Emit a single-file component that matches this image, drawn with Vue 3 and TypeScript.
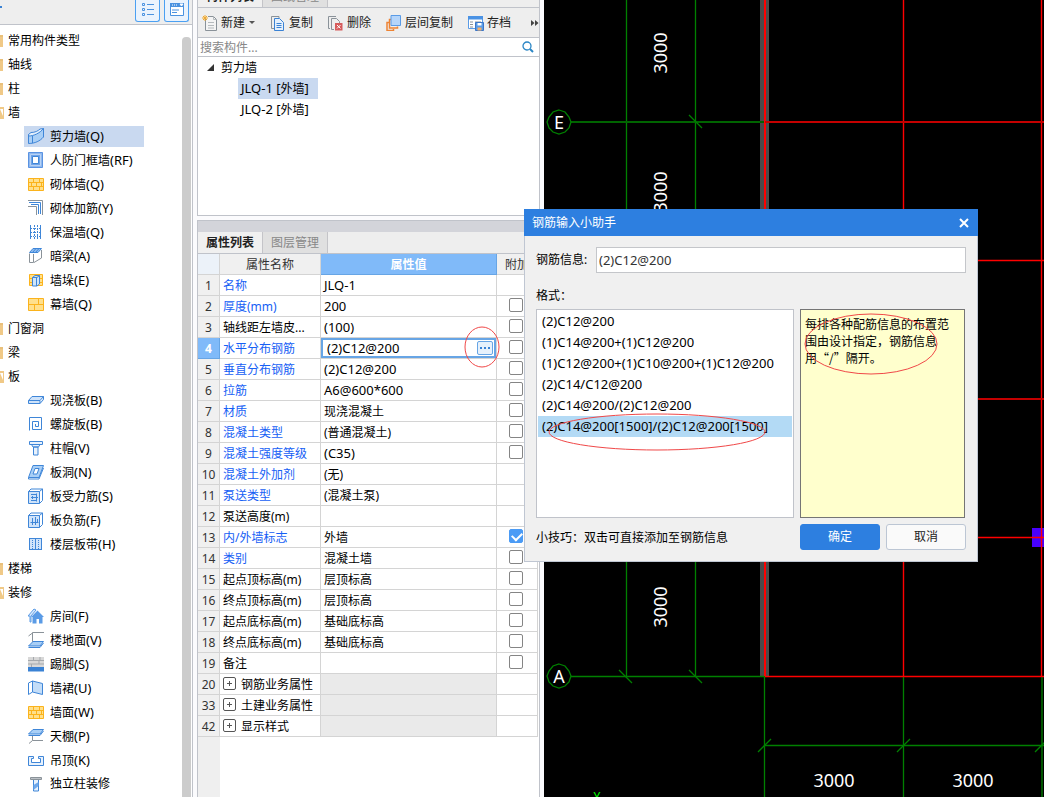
<script setup lang="ts">
import { ref } from 'vue'

interface TreeNode { name: string; hotkey?: string; icon: string; child?: boolean; selected?: boolean }
interface PropRow { no: number; name: string; value?: string; link?: boolean; check?: 'on' | 'off'; group?: boolean; editing?: boolean }

const B = '#3f86d8'
const L = '#cfe3fa'
const O = '#fbb31c'
const G = '#8a9299'

const icons: Record<string, string> = {
  wall: `<path d="M.5 6.500C7 6.500 12 4.500 15.500 .5V9C12 13 7 15.500 .5 15.500Z" fill="#a9cff6" stroke="${B}"/><path d="M.5 6.500L3 4.500C7 4.500 10 3 12 1L15.500 .5C12 5 6 8 .5 8Z" fill="#e4f0fc" stroke="${B}"/><path d="M4.500 8V15" stroke="${B}"/>`,
  frame: `<path d="M.5 .5h14v15h-14z" fill="#8fb8ee" stroke="#5a93e2"/><path d="M2.500 2.500h10v11h-10z" fill="#6fa3e8" stroke="#b8d3f5"/><path d="M4.500 4.500h6v7h-6z" fill="#fff" stroke="${B}"/>`,
  brick: `<path d="M.5 2.500h15v12h-15z" fill="#ffe08c" stroke="${O}"/><path d="M0 6.500h16M0 10.500h16M5.500 2v4M11.500 2v4M3.500 6v4M8.500 6v4M13.500 6v4M5.500 10v4M11.500 10v4" stroke="${O}" fill="none"/>`,
  rebar: `<path d="M0 .5h14.500V15M0 6.500h8.500V15" stroke="${G}" fill="none"/><path d="M1 2.500h11.500V14M3 4.500h7.500V14" stroke="${B}" fill="none"/>`,
  insul: `<path d="M2.500 1v14M12.500 1v14" stroke="${B}" fill="none"/><path d="M6.500 1v14M9.500 1v14" stroke="${B}" stroke-dasharray="2 1"/><path d="M3 4.500h10M3 8.500h10M3 12.500h10" stroke="${B}" stroke-dasharray="1 1"/>`,
  hidden: `<path d="M1.500 5.500L5 1.500h8.500V10L10 14L6.500 14.500H1.500Z" fill="#fff"/><path d="M1.500 5.500V14.500H5.500V6M13.500 2V10L6 14.500" fill="none" stroke="${G}"/><path d="M1.500 4.500L5 .5h8.500L10 4.500ZM4.500 4.500L8 .5M7.500 4.500L11 .5" fill="#8ebcf0" stroke="${B}"/>`,
  pier: `<path d="M1.500 2.500h13v11h-13z" fill="#ffe08c" stroke="${O}"/><path d="M1 6.500h14M1 10.500h14" stroke="${O}"/><path d="M4.500 5.500L7 3.500h4.500v8.500L9 14H4.500ZM8.500 5.500V14M4.500 5.500H9L11.500 3.500" fill="#cfe6fb" stroke="${B}"/>`,
  curtain: `<path d="M.5 2.500h15v12h-15z" fill="#ffe08c" stroke="${O}"/><path d="M0 8.500h16M10.500 3v5.500M6.500 8.500V15" stroke="${O}"/>`,
  slab: `<path d="M.5 8.500L4 4.500h11.500L12 8.500ZM.5 8.500v3H12v-3M12 11.500L15.500 7.500v-3" fill="${L}" stroke="${B}"/>`,
  spiral: `<path d="M1.500 14.500V1.500h12v12H4.500V5.500h6v5H7.500V8" stroke="${B}" fill="none"/>`,
  cap: `<path d="M1.500 1.500h13v3h-13zM3.500 4.500h8.500l-1.500 2.500H5ZM5.500 7h4.500v8H5.500z" fill="#e8f2fd" stroke="${B}"/>`,
  hole: `<path d="M.5 13.500L5 1.500h10.500L11 13.500Z" fill="#a9cff6" stroke="${B}"/><path d="M5 10L7 4.500h4L9 10Z" fill="#fff" stroke="${B}"/><path d="M.5 13.500v1.500H11L15.500 4" fill="none" stroke="${B}"/>`,
  force: `<path d="M.5 3.500h11v12H.5z" fill="${L}" stroke="${B}"/><path d="M.5 3.500L3 1h11.500v11.500L11.500 15.500M11.500 3.500L14.500 1M3 6.500h6M3 9.500h7M3 12.500h6M8.500 5.500v8M4.500 8v3" stroke="${B}" fill="none"/>`,
  neg: `<path d="M.5 3.500h11v12H.5z" fill="${L}" stroke="${B}"/><path d="M.5 3.500L3 1h11.500v11.500L11.500 15.500M11.500 3.500L14.500 1M4.500 6v7M7.500 5v8M2.500 10.500h8M9.500 7v4" stroke="${B}" fill="none"/>`,
  band: `<path d="M1.500 2.500h12v11h-12z" fill="${L}"/><path d="M1 2.500h13M1 13.500h13M1.500 2v12M7.500 2v12M13.500 2v12" stroke="${B}"/><path d="M4.500 4v9M10.500 4v9" stroke="${B}" stroke-dasharray="1 1"/>`,
  house: `<path d="M0 8L6 1l2 1-5 6v6H2V8Z" fill="#d9eafc" stroke="#5a9be6"/><path d="M3 9L9.500 2.500 16 9h-1.500v6.500H11V11H8.500v4.500H4.500V9Z" fill="#5a9be6"/>`,
  floor: `<path d="M16 .5H4.500V10M4.500 1L.5 4" stroke="${G}" fill="none"/><path d="M.5 14L5 9.500h10.500L12 14Z" fill="#a9cff6" stroke="${B}"/><path d="M.5 15.500H12L15.500 11" stroke="${B}" fill="none"/>`,
  skirt: `<path d="M0 1h16v10H0z" fill="#d8d8d8"/><path d="M0 4.500h16M0 8h16M5.500 1v3.500M11 4.500V8M3.500 8v3M12 1v3" stroke="#a5a9ad"/><path d="M0 11h16v4.500H0z" fill="#3a82d4"/>`,
  dado: `<path d="M.5 3L4.500 1v11L.5 14.500Z" fill="#fff" stroke="${B}"/><path d="M4.500 1L14.500 3.500v11L4.500 12Z" fill="#c3ddf8" stroke="${B}"/>`,
  ceil: `<path d="M.5 6L5 1.500h10.500L12 6Z" fill="#a9cff6" stroke="${B}"/><path d="M.5 7.500H12L15.500 3" stroke="${B}" fill="none"/><path d="M4.500 8v4.500H15M4.500 12.500L1 15.500" stroke="${G}" fill="none"/>`,
  hang: `<path d="M.5 4.500h5v2h-2v4h9v-4h-2v-2h5v9H.5z" fill="#e8f2fd" stroke="${B}"/>`,
  column: `<path d="M2.500 1.500h11v2h-11z" fill="#bcc1c6" stroke="${G}"/><path d="M5.500 4v11h5V4" fill="#e8f2fd" stroke="${B}"/><path d="M5.500 9L10.500 6v4L5.500 14Z" fill="#6fa8ea"/>`,
}

const nodes: TreeNode[] = [
  { name: '常用构件类型', icon: 'closed' },
  { name: '轴线', icon: 'closed' },
  { name: '柱', icon: 'closed' },
  { name: '墙', icon: 'open' },
  { name: '剪力墙', hotkey: '(Q)', icon: 'wall', child: true, selected: true },
  { name: '人防门框墙', hotkey: '(RF)', icon: 'frame', child: true },
  { name: '砌体墙', hotkey: '(Q)', icon: 'brick', child: true },
  { name: '砌体加筋', hotkey: '(Y)', icon: 'rebar', child: true },
  { name: '保温墙', hotkey: '(Q)', icon: 'insul', child: true },
  { name: '暗梁', hotkey: '(A)', icon: 'hidden', child: true },
  { name: '墙垛', hotkey: '(E)', icon: 'pier', child: true },
  { name: '幕墙', hotkey: '(Q)', icon: 'curtain', child: true },
  { name: '门窗洞', icon: 'closed' },
  { name: '梁', icon: 'closed' },
  { name: '板', icon: 'open' },
  { name: '现浇板', hotkey: '(B)', icon: 'slab', child: true },
  { name: '螺旋板', hotkey: '(B)', icon: 'spiral', child: true },
  { name: '柱帽', hotkey: '(V)', icon: 'cap', child: true },
  { name: '板洞', hotkey: '(N)', icon: 'hole', child: true },
  { name: '板受力筋', hotkey: '(S)', icon: 'force', child: true },
  { name: '板负筋', hotkey: '(F)', icon: 'neg', child: true },
  { name: '楼层板带', hotkey: '(H)', icon: 'band', child: true },
  { name: '楼梯', icon: 'closed' },
  { name: '装修', icon: 'open' },
  { name: '房间', hotkey: '(F)', icon: 'house', child: true },
  { name: '楼地面', hotkey: '(V)', icon: 'floor', child: true },
  { name: '踢脚', hotkey: '(S)', icon: 'skirt', child: true },
  { name: '墙裙', hotkey: '(U)', icon: 'dado', child: true },
  { name: '墙面', hotkey: '(W)', icon: 'brick', child: true },
  { name: '天棚', hotkey: '(P)', icon: 'ceil', child: true },
  { name: '吊顶', hotkey: '(K)', icon: 'hang', child: true },
  { name: '独立柱装修', icon: 'column', child: true },
]

const tools = [
  { label: '新建', menu: true, icon: `<path d="M3.500 4V15.500h11V4.500l-3-3H6" fill="#f4f4f4" stroke="${G}"/><path d="M11.500 1.500v3h3M6 7.500h6M6 10.500h6M6 13h6" fill="none" stroke="#b5babd"/><path d="M0 3h6M3 0v6M1 1l4 4M5 1L1 5" stroke="#f0a92e"/>` },
  { label: '复制', icon: `<path d="M9 3V1.500H1.500v12H4" fill="none" stroke="${G}"/><path d="M4.500 3.500h5l4 4v8h-9z" fill="#e4f0fc" stroke="#3a82d4"/><path d="M6.500 8.500h5M6.500 10.500h5M6.500 12.500h5" stroke="#3a82d4"/>` },
  { label: '删除', icon: `<path d="M8 1.500H.5v12H2" fill="none" stroke="${G}"/><path d="M6 14.500H3.500v-11h5l3 3V8" fill="none" stroke="${G}"/><path d="M7 8h7.500v7.500H7z" fill="#d65c5c"/><path d="M9 10l3.500 3.500M12.500 10L9 13.500" stroke="#fff"/>` },
  { label: '层间复制', icon: `<path d="M3 7.500H1V15.500h6.500V14" fill="none" stroke="#ee8434" stroke-width="1.500"/><path d="M5 4.500H3.500v8.500h8V11.500" fill="none" stroke="#ee8434" stroke-width="1.500"/><path d="M5 .5h9.500v10H5z" fill="#b5d5fa" stroke="#5a9be6"/>` },
  { label: '存档', icon: `<path d="M.5 1.500h14v12H.5z" fill="#fff" stroke="#5a9be6"/><path d="M0 1h15v3.500H0z" fill="#4a92e4"/><path d="M2 7h3M7 7h6M2 9.500h3M2 12h3" stroke="${G}"/><path d="M7.500 7.500h8v8h-8z" fill="#5a9be6" stroke="#3a76c8"/><path d="M9.500 8h4v2.500h-4z" fill="#fff"/><path d="M9.500 12.500h4v3h-4z" fill="#f4b06a"/>` },
]

const rows: PropRow[] = [
  { no: 1, name: '名称', value: 'JLQ-1', link: true },
  { no: 2, name: '厚度(mm)', value: '200', link: true, check: 'off' },
  { no: 3, name: '轴线距左墙皮...', value: '(100)', check: 'off' },
  { no: 4, name: '水平分布钢筋', value: '(2)C12@200', link: true, check: 'off', editing: true },
  { no: 5, name: '垂直分布钢筋', value: '(2)C12@200', link: true, check: 'off' },
  { no: 6, name: '拉筋', value: 'A6@600*600', link: true, check: 'off' },
  { no: 7, name: '材质', value: '现浇混凝土', link: true, check: 'off' },
  { no: 8, name: '混凝土类型', value: '(普通混凝土)', link: true, check: 'off' },
  { no: 9, name: '混凝土强度等级', value: '(C35)', link: true, check: 'off' },
  { no: 10, name: '混凝土外加剂', value: '(无)', link: true },
  { no: 11, name: '泵送类型', value: '(混凝土泵)', link: true },
  { no: 12, name: '泵送高度(m)' },
  { no: 13, name: '内/外墙标志', value: '外墙', link: true, check: 'on' },
  { no: 14, name: '类别', value: '混凝土墙', link: true, check: 'off' },
  { no: 15, name: '起点顶标高(m)', value: '层顶标高', check: 'off' },
  { no: 16, name: '终点顶标高(m)', value: '层顶标高', check: 'off' },
  { no: 17, name: '起点底标高(m)', value: '基础底标高', check: 'off' },
  { no: 18, name: '终点底标高(m)', value: '基础底标高', check: 'off' },
  { no: 19, name: '备注', check: 'off' },
  { no: 20, name: '钢筋业务属性', group: true },
  { no: 33, name: '土建业务属性', group: true },
  { no: 42, name: '显示样式', group: true },
]

const isLatin = (s?: string) => !!s && /^[\x20-\x7e]+$/.test(s)

const formats = [
  '(2)C12@200',
  '(1)C14@200+(1)C12@200',
  '(1)C12@200+(1)C10@200+(1)C12@200',
  '(2)C14/C12@200',
  '(2)C14@200/(2)C12@200',
  '(2)C14@200[1500]/(2)C12@200[1500]',
]
const activeFormat = ref(5)
const rebar = ref('(2)C12@200')
const cellValue = ref('(2)C12@200')
const keyword = ref('')
</script>

<template>
  <div class="app">
    <aside class="nav">
      <div class="nav-bar">
        <span class="dash"></span>
        <button class="view-btn" type="button" aria-label="列表视图">
          <svg width="16" height="16" fill="none" stroke="#4a92e0"><path d="M2.500 1.500h2v2h-2zM2.500 6.500h2v2h-2zM2.500 11.500h2v2h-2z" /><path d="M7 2.500h7M7 7.500h7M7 12.500h7" /></svg>
        </button>
        <button class="view-btn" type="button" aria-label="窗口视图">
          <svg width="16" height="16"><path d="M1.500 1.500h13v12h-13z" fill="#fff" stroke="#4a92e0" /><path d="M1 1h14v4H1z" fill="#4a92e0" /><path d="M3 3h1m1 0h1m1 0h1m3-1h3l-1.500 2z" stroke="#fff" fill="#fff" /><path d="M3 8h7M3 10.500h5" stroke="#4a92e0" /></svg>
        </button>
      </div>
      <div class="nav-body">
        <ul class="nav-list">
          <li v-for="(n, i) in nodes" :key="i" :class="{ child: n.child }">
            <template v-if="n.child">
              <a href="#" class="leaf" :class="{ selected: n.selected }"><svg width="16" height="16" v-html="icons[n.icon]"></svg><span>{{ n.name }}<span v-if="n.hotkey" class="latin">{{ n.hotkey }}</span></span></a>
            </template>
            <template v-else>
              <svg v-if="n.icon === 'closed'" class="folder" width="4" height="14"><path d="M0 1h3v2H0z" fill="#e9c07a" /><path d="M0 3h3v10H0z" fill="#f0c987" /></svg>
              <svg v-else class="folder" width="4" height="14"><path d="M0 1h4v12H0z" fill="#f0c987" /><path d="M0 3h3v7z" fill="#fff" /></svg>
              <span>{{ n.name }}</span>
            </template>
          </li>
        </ul>
        <div class="scroll"></div>
      </div>
    </aside>

    <section class="middle">
      <div class="parts">
        <div class="tab-strip cut">
          <button type="button" class="tab on">构件列表</button><button type="button" class="tab">图纸管理</button>
        </div>
        <div class="toolbar">
          <button v-for="t in tools" :key="t.label" type="button" class="tool">
            <svg width="16" height="16" v-html="t.icon"></svg>{{ t.label }}<i v-if="t.menu" class="caret"></i>
          </button>
          <button type="button" class="more" aria-label="更多"><svg width="8" height="8"><path d="M0 1l3.500 3L0 7zM4 1l3.500 3L4 7z" fill="#444" /></svg></button>
        </div>
        <div class="search">
          <input v-model="keyword" type="text" placeholder="搜索构件..." aria-label="搜索构件" />
          <svg width="12" height="12" fill="none" stroke="#2b86c5"><circle cx="5" cy="5" r="4" stroke-width="1.300" /><path d="M8 8l3 3" stroke-width="2" /></svg>
        </div>
        <div class="part-tree">
          <div class="root"><svg width="7" height="7"><path d="M7 0v7H0z" fill="#333" /></svg>剪力墙</div>
          <a href="#" class="part selected"><span class="latin">JLQ-1 [</span>外墙<span class="latin">]</span></a>
          <a href="#" class="part"><span class="latin">JLQ-2 [</span>外墙<span class="latin">]</span></a>
        </div>
      </div>

      <div class="props">
        <div class="grip"></div>
        <div class="tab-strip">
          <button type="button" class="tab on">属性列表</button><button type="button" class="tab">图层管理</button>
        </div>
        <div class="sheet">
          <table>
            <colgroup><col class="c-no" /><col class="c-name" /><col class="c-value" /><col class="c-extra" /></colgroup>
            <thead>
              <tr><th class="corner"></th><th>属性名称</th><th class="hot">属性值</th><th>附加</th></tr>
            </thead>
            <tbody>
              <tr v-for="r in rows" :key="r.no">
                <th scope="row" :class="{ hot: r.editing }">{{ r.no }}</th>
                <td :class="{ link: r.link }">
                  <div v-if="r.group" class="group"><button type="button" :aria-label="'展开' + r.name"><svg width="13" height="13" fill="none" stroke="#555"><rect x=".5" y=".5" width="12" height="12" rx="1.500" /><path d="M4 6.500h5M6.500 4v5" /></svg></button>{{ r.name }}</div>
                  <template v-else>{{ r.name }}</template>
                </td>
                <td v-if="r.editing" class="editing">
                  <div class="editor">
                    <input v-model="cellValue" class="latin" type="text" :aria-label="r.name" />
                    <button type="button" aria-label="钢筋输入小助手"><svg width="10" height="2" fill="#3a82d4"><path d="M0 0h2v2H0zM4 0h2v2H4zM8 0h2v2H8z" /></svg></button>
                  </div>
                </td>
                <td v-else :class="{ latin: isLatin(r.value), blank: r.group }">{{ r.value }}</td>
                <td class="extra"><input v-if="r.check" type="checkbox" :checked="r.check === 'on'" :aria-label="r.name + ' 附加'" /></td>
              </tr>
            </tbody>
          </table>
        </div>
      </div>
    </section>

    <main class="canvas">
      <svg width="100%" height="100%">
        <rect x="216" y="0" width="9" height="676" fill="#4a4a4a" />
        <g stroke="#008000" stroke-width="1.300" fill="none">
          <path d="M82.500 0V676M151.500 0V676M220.500 676V797M359.500 676V797M498 676V797" />
          <path d="M27 122H220" stroke="#006400" stroke-width="2" />
          <path d="M27 676.500H220M220 745.500H1000" />
          <path d="M145 115l13 13M75 670l13 13M145 670l13 13M214 752l13-13M353 752l13-13M491 752l13-13" />
          <path d="M15 110L21 112 25 117 27 122 25 128 21 132 15 134 9 132 5 128 3 122 5 117 9 112Z" />
          <path d="M15 664L21 666 25 671 27 676 25 682 21 686 15 688 9 686 5 682 3 676 5 671 9 666Z" />
        </g>
        <rect x="488" y="528" width="22" height="19" fill="#4800ff" />
        <g stroke="#f00" stroke-width="1.400" fill="none">
          <path d="M221 0V676" stroke-width="2" />
          <path d="M359.500 0V676M497.500 0V676M221 260.500H1000M221 537.500H1000M221 676.500H1000" />
          <path d="M221 122H1000M221 399H1000" stroke="#c40000" stroke-width="2" />
        </g>
        <g class="cad-text">
          <text x="15" y="129">E</text>
          <text x="15" y="683">A</text>
          <text x="290" y="787">3000</text>
          <text x="429" y="787">3000</text>
          <text transform="translate(123 53) rotate(-90)">3000</text>
          <text transform="translate(123 192) rotate(-90)">3000</text>
          <text transform="translate(123 607) rotate(-90)">3000</text>
          <text class="axis" x="53" y="801">Y</text>
        </g>
      </svg>
    </main>

    <div class="dialog" role="dialog" aria-labelledby="dlg-title">
      <header>
        <span id="dlg-title">钢筋输入小助手</span>
        <button type="button" aria-label="关闭"><svg width="10" height="10" stroke="#fff" stroke-width="2"><path d="M1 1l8 8M9 1L1 9" /></svg></button>
      </header>
      <div class="dlg-body">
        <div class="field">
          <label for="rebar">钢筋信息:</label>
          <input id="rebar" v-model="rebar" class="latin" type="text" />
        </div>
        <div class="caption">格式：</div>
        <div class="pair">
          <ul class="formats latin">
            <li v-for="(f, i) in formats" :key="f" :class="{ active: i === activeFormat }" @click="activeFormat = i" @dblclick="rebar = f">{{ f }}</li>
          </ul>
          <p class="note">每排各种配筋信息的布置范围由设计指定，钢筋信息用“/”隔开。</p>
        </div>
        <footer>
          <span>小技巧：双击可直接添加至钢筋信息</span>
          <button type="button" class="primary">确定</button>
          <button type="button">取消</button>
        </footer>
      </div>
    </div>

    <svg class="marks" width="100%" height="100%" fill="none" stroke="#f04848">
      <ellipse cx="482" cy="347" rx="17" ry="20" />
      <ellipse cx="657" cy="432" rx="108" ry="18" />
      <ellipse cx="871" cy="344" rx="66" ry="30" />
    </svg>
  </div>
</template>

<style>
body { margin: 0; overflow: hidden; }
</style>

<style scoped>
.app {
  position: relative;
  display: grid;
  grid-template-columns: 193px 343px minmax(0, 1fr);
  column-gap: 4px;
  height: 100vh;
  overflow: hidden;
  background: #fbfbfd;
  color: #000;
  font-family: "Noto Sans", "Noto Sans CJK SC", sans-serif;
  font-size: 12px;
  line-height: 20px;
}
.app * { box-sizing: border-box; }
button, input { font: inherit; color: inherit; margin: 0; }
button { padding: 0; border: 0; background: none; }
ul { list-style: none; margin: 0; padding: 0; }
a { color: inherit; text-decoration: none; }
svg { display: block; flex: none; }
.latin { font-size: 13px; }

.nav { display: flex; flex-direction: column; min-height: 0; background: #fff; border-right: 1px solid #c0c3ca; }
.nav-bar { display: flex; gap: 4px; flex: none; height: 25px; padding-right: 3px; background: #eee; border-bottom: 1px solid #c0c3ca; }
.dash { width: 2px; height: 2px; margin: 6px auto 0 0; background: #3a82d4; }
.view-btn { display: flex; align-items: center; justify-content: center; width: 25px; height: 22px; padding-bottom: 2px; background: #eaf3fd; border: 1px solid #4ba0f2; border-top: 0; border-radius: 0 0 3px 3px; }
.nav-body { display: flex; flex: 1; min-height: 0; overflow: hidden; padding: 3px 1px 0 0; }
.nav-list { flex: 1; }
.nav-list li { display: flex; align-items: center; gap: 4px; height: 24px; padding-top: 2px; white-space: nowrap; }
.nav-list li.child { padding: 0 0 0 24px; }
.leaf { display: flex; align-items: center; gap: 6px; min-width: 120px; height: 21px; padding-left: 4px; }
.selected { background: #c9d9f0; }
.scroll { width: 9px; margin-top: 9px; border-radius: 4px 4px 0 0; background: #ccc; }

.middle { display: flex; flex-direction: column; gap: 4px; min-height: 0; }
.parts { flex: none; display: flex; flex-direction: column; height: 216px; background: #fff; border: 1px solid #c0c3ca; border-top: 0; }
.tab-strip { display: flex; flex: none; height: 22px; background: #eee; border-bottom: 1px solid #c0c3ca; }
.tab-strip.cut { height: 8px; align-items: flex-end; overflow: hidden; }
.tab { flex: none; width: 65px; height: 21px; line-height: 20px; background: #e0e0e0; color: #888; border-right: 1px solid #c4c4c8; }
.tab.on { background: #f0f0f0; color: #222; font-weight: 700; }
.toolbar { display: flex; flex: none; align-items: center; gap: 15px; height: 30px; padding-left: 4px; background: #eee; border-bottom: 1px solid #c0c3ca; color: #222; white-space: nowrap; }
.tool { display: flex; align-items: center; gap: 3px; }
.caret { margin-left: 1px; border: 3px solid transparent; border-top-color: #555; border-bottom: 0; }
.more { margin-left: auto; }
.search { display: flex; flex: none; align-items: center; height: 19px; padding: 0 5px 0 2px; border-bottom: 1px solid #c0c3ca; }
.search input { flex: 1; min-width: 0; height: 18px; padding: 1px 0 0; border: 0; outline: 0; background: none; }
.search input::placeholder { color: #888; opacity: 1; }
.part-tree { display: flex; flex-direction: column; align-items: flex-start; }
.root { display: flex; align-items: center; gap: 7px; height: 21px; padding-left: 9px; }
.part { height: 21px; margin-left: 40px; padding: 0 9px 0 3px; white-space: nowrap; }

.props { display: flex; flex: 1; flex-direction: column; min-height: 0; background: #fff; border: 1px solid #c0c3ca; border-bottom: 0; }
.grip { flex: none; height: 11px; background: #d3d4da; }
.sheet { flex: 1; min-height: 0; overflow: hidden; background: linear-gradient(to right, #efefef 22px, #fff 22px); }
table { table-layout: fixed; width: 340px; border-collapse: separate; border-spacing: 0; }
.c-no { width: 22px; }
.c-name { width: 101px; }
.c-value { width: 176px; }
.c-extra { width: 41px; }
th, td { height: 21px; padding: 0 0 0 3px; border-right: 1px solid #d4d4d4; border-bottom: 1px solid #d4d4d4; font-weight: 400; text-align: left; line-height: 19px; white-space: nowrap; overflow: hidden; }
th { padding: 0; background: #f0f0f0; color: #333; text-align: center; }
.corner { background: #ecf2f9; }
th.hot { background: #80baf9; border-color: #67a5e5; color: #fff; font-weight: 700; }
.link { color: #1660f5; }
.blank { background: #eaeaea; }
.editing { padding: 0; }
.editor { display: flex; align-items: center; height: 20px; padding: 0 1px 0 4px; border: 2px solid #67a5e5; }
.editor input { flex: 1; min-width: 0; height: 16px; padding: 0; border: 0; outline: 0; line-height: 16px; }
.editor button { display: flex; align-items: center; justify-content: center; width: 16px; height: 14px; background: #e6f1fc; border: 1px solid #67a5e5; border-radius: 2px; }
.extra { padding-left: 12px; }
.extra input { display: block; width: 14px; height: 14px; margin-bottom: 3px; appearance: none; background: #fff; border: 1px solid #858585; border-radius: 2px; }
.extra input:checked { border-color: #4b9bf5; background: #4b9bf5; }
.extra input:checked::after { content: ""; display: block; width: 8px; height: 5px; margin: 2px 0 0 2px; border: solid #fff; border-width: 0 0 2px 2px; transform: rotate(-45deg); }
.group { display: flex; align-items: center; gap: 5px; }
.group button { padding-bottom: 1px; }

.canvas { min-width: 0; overflow: hidden; background: #000; }
.cad-text { fill: #fff; font-size: 18px; text-anchor: middle; }
.axis { fill: #0f0; font-size: 12px; }

.dialog { position: absolute; left: 524px; top: 209px; width: 454px; background: #f0f0f0; border: 1px solid #bfc6d2; border-top: 0; }
.dialog header { display: flex; align-items: center; justify-content: space-between; height: 27px; margin: 0 -1px; padding: 0 9px 0 8px; background: #2d7fe0; color: #fff; }
.dlg-body { padding: 11px; }
.field { display: flex; align-items: center; gap: 8px; }
.field label { width: 52px; white-space: nowrap; }
.field input { flex: 1; min-width: 0; height: 26px; padding: 0 2px; background: #fff; border: 1px solid #c4c6ca; color: #333; outline: 0; }
.caption { margin: 13px 0 3px; }
.pair { display: grid; grid-template-columns: 258px 1fr; gap: 6px; height: 209px; padding-right: 1px; }
.formats { padding: 1px; background: #fff; border: 1px solid #c0c3ca; white-space: nowrap; }
.formats li { height: 21px; padding-left: 4px; }
.formats li.active { background: #b3daf5; }
.note { margin: 0; padding: 5px 4px; background: #ffffcd; border: 1px solid #757575; font-family: "Noto Sans CJK SC", sans-serif; line-height: 17px; }
.dialog footer { display: flex; align-items: center; gap: 6px; margin-top: 6px; }
.dialog footer span { margin-right: auto; padding-top: 2px; }
.dialog footer button { width: 80px; height: 26px; background: #fafafa; border: 1px solid #bcc6d4; border-radius: 3px; color: #222; }
.dialog footer .primary { background: #2d7fe0; border-color: #2d7fe0; color: #fff; }
.marks { position: absolute; inset: 0; pointer-events: none; }
</style>
